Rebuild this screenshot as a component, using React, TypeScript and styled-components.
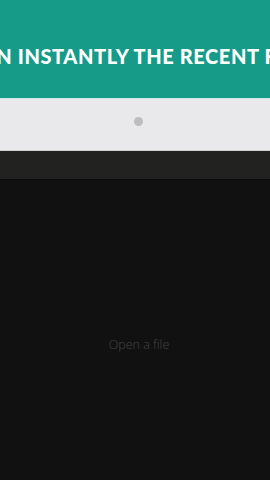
import styled, { createGlobalStyle } from "styled-components";

const GlobalStyle = createGlobalStyle`
  html, body {
    margin: 0;
    padding: 0;
    height: 100%;
    background: #111111;
  }
  #root {
    height: 100%;
  }
`;

export default function App() {
  return (
    <>
      <GlobalStyle />
      <Screen>
        <Banner>
          <BannerText>OPEN INSTANTLY THE RECENT FILES</BannerText>
        </Banner>
        <Pager>
          <Dot />
        </Pager>
        <Toolbar />
        <Body>
          <Hint>Open a file</Hint>
        </Body>
      </Screen>
    </>
  );
}

const Screen = styled.div`
  width: 270px;
  height: 480px;
  display: flex;
  flex-direction: column;
  overflow: hidden;
  font-family: "Open Sans", sans-serif;
`;

const Banner = styled.div`
  height: 98px;
  background: #169b88;
  display: flex;
  align-items: center;
  justify-content: center;
  overflow: hidden;
  border-bottom: 1px solid #c9ecea;
`;

const BannerText = styled.div`
  white-space: nowrap;
  font-family: "Lato", sans-serif;
  font-weight: 900;
  font-size: 20px;
  letter-spacing: 0.6px;
  color: #ffffff;
  padding-top: 14px;
  margin-left: 2px;
`;

const Pager = styled.div`
  height: 51px;
  background: #e9e9eb;
  display: flex;
  align-items: center;
  justify-content: center;
  border-bottom: 1px solid #cfcfcf;
`;

const Dot = styled.div`
  width: 9px;
  height: 9px;
  border-radius: 50%;
  background: #bdbdbd;
  margin-left: 6px;
  margin-bottom: 7px;
`;

const Toolbar = styled.div`
  height: 28px;
  background: #222221;
  border-bottom: 1px solid #0b0b0b;
`;

const Body = styled.div`
  flex: 1;
  background: #111111;
  display: flex;
  align-items: center;
  justify-content: center;
`;

const Hint = styled.div`
  font-size: 12.5px;
  font-weight: 300;
  color: #444444;
  margin-top: 28px;
  margin-left: 8px;
`;
